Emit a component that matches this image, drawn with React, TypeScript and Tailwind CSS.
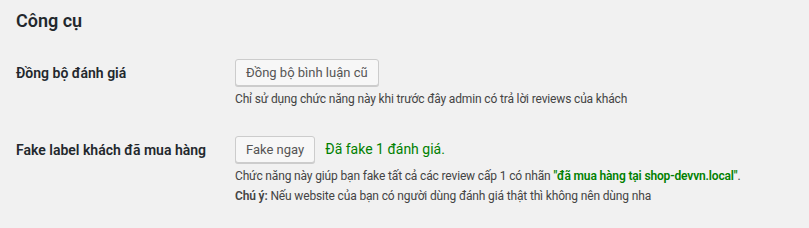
export default function App() {
  return (
    <div
      className="min-h-[228px] w-full bg-[#f1f1f1] pl-4 pt-[9px] text-[13px] text-[#444]"
      style={{ fontFamily: '"Segoe UI", Roboto, "Noto Sans", sans-serif' }}
    >
      <h2 className="text-[18px] font-semibold leading-[24px] text-[#23282d]">Công cụ</h2>

      <div className="mt-[26px] flex">
        <div className="w-[219px] shrink-0 pt-[4px] text-[14px] font-semibold leading-[20px] text-[#23282d]">
          Đồng bộ đánh giá
        </div>
        <div>
          <button className="h-[27px] rounded-[3px] border border-[#ccc] bg-[#f7f7f7] px-[10px] text-[13px] leading-[25px] text-[#555] shadow-[0_1px_0_#ccc]">
            Đồng bộ bình luận cũ
          </button>
          <p className="mt-[3px] whitespace-nowrap text-[12px] leading-[20px] tracking-[-0.15px]">
            Chỉ sử dụng chức năng này khi trước đây admin có trả lời reviews của khách
          </p>
        </div>
      </div>

      <div className="mt-[27px] flex">
        <div className="w-[219px] shrink-0 pt-[4px] text-[14px] font-semibold leading-[20px] text-[#23282d]">
          Fake label khách đã mua hàng
        </div>
        <div>
          <div className="flex items-center">
            <button className="h-[27px] rounded-[3px] border border-[#ccc] bg-[#f7f7f7] px-[10px] text-[13px] leading-[25px] text-[#555] shadow-[0_1px_0_#ccc]">
              Fake ngay
            </button>
            <span className="ml-[10px] text-[14px] text-[#008000]">Đã fake 1 đánh giá.</span>
          </div>
          <p className="mt-[3px] whitespace-nowrap text-[12px] leading-[20px] tracking-[-0.15px]">
            Chức năng này giúp bạn fake tất cả các review cấp 1 có nhãn{" "}
            <span className="font-semibold text-[#008000]">"đã mua hàng tại shop-devvn.local"</span>.
          </p>
          <p className="whitespace-nowrap text-[12px] leading-[20px] tracking-[-0.15px]">
            <span className="font-semibold">Chú ý:</span> Nếu website của bạn có người dùng đánh giá thật thì không nên dùng nha
          </p>
        </div>
      </div>
    </div>
  );
}
